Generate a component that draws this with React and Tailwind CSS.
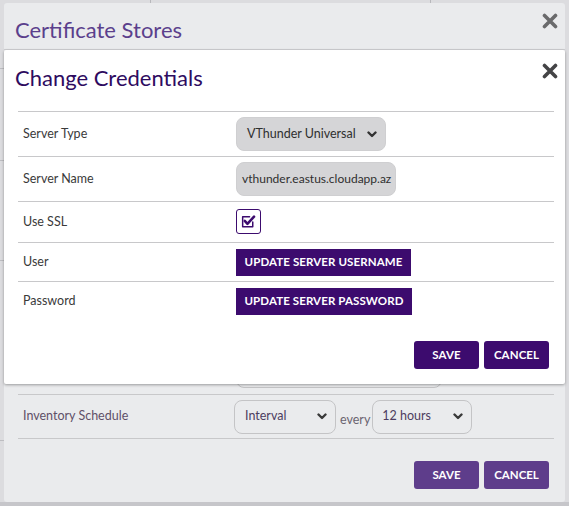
import React from 'react';

const font = { fontFamily: 'Lato, "Open Sans", Arial, sans-serif' };

const Chevron = ({ className = '' }) => (
  <svg viewBox="0 0 10 7" className={`w-[10px] h-[7px] ${className}`} fill="none" stroke="currentColor" strokeWidth="2.4" strokeLinecap="round" strokeLinejoin="round">
    <path d="M1.5 1.5 L5 5 L8.5 1.5" />
  </svg>
);

const CloseIcon = ({ className = '' }) => (
  <svg viewBox="0 0 16 16" className={`w-[16px] h-[16px] ${className}`} fill="none" stroke="currentColor" strokeWidth="3.6" strokeLinecap="round">
    <path d="M2.5 2.5 L13.5 13.5 M13.5 2.5 L2.5 13.5" />
  </svg>
);

const Row = ({ label, h, border = true, children }) => (
  <div className={`flex items-center ${border ? 'border-t border-[#c8c8ca]' : ''} ${h}`}>
    <div className="w-[218px] pl-[5px] text-[12.5px] text-[#3a3a3a]">{label}</div>
    <div className="flex items-center">{children}</div>
  </div>
);

const PurpleButton = ({ children, className = '' }) => (
  <button type="button" className={`bg-[#3c0b6e] text-white text-[11.5px] font-bold tracking-[0.1px] ${className}`}>
    {children}
  </button>
);

export default function App() {
  return (
    <div className="relative w-[569px] h-[506px] overflow-hidden bg-[#c6c6ca]" style={font}>
      {/* page behind */}
      <div className="absolute left-0 top-0 w-[569px] h-[502px] bg-[#dcdcdf]">
        <div className="absolute left-[150px] top-0 w-px h-[4px] bg-[#b8b8bc]" />
        <div className="absolute left-[430px] top-0 w-px h-[4px] bg-[#b8b8bc]" />
        <div className="absolute left-0 top-[68px] w-[4px] h-px bg-[#bdbdc1]" />
        <div className="absolute left-0 top-[160px] w-[4px] h-px bg-[#bdbdc1]" />
        <div className="absolute left-0 top-[260px] w-[4px] h-px bg-[#bdbdc1]" />
        <div className="absolute left-0 top-[440px] w-[4px] h-px bg-[#bdbdc1]" />
      </div>

      {/* outer modal (dimmed) */}
      <div className="absolute left-[4px] top-[3px] w-[561px] h-[499px] bg-[#eaebed] rounded-[3px] flex flex-col">
        <div className="h-[47px] flex items-center justify-between pl-[11px] pr-[7px] pt-[6px] border-b border-[#d0d0d3]">
          <span className="text-[22px] text-[#5b3f8c]">Certificate Stores</span>
          <CloseIcon className="text-[#6a6a6c] -mt-[17px]" />
        </div>
        <div className="flex-1 flex flex-col justify-end pl-[14px] pr-[11px] pb-[13px]">
          <div className="h-[46px] flex items-end pb-[6px]">
            <div className="ml-[218px] w-[206px] h-[34px] rounded-[8px] border border-[#c4c4c6]" />
          </div>
          <div className="flex items-center h-[45px] border-t border-b border-[#c8c8ca]">
            <div className="w-[216px] pl-[5px] text-[12.5px] text-[#5f5068]">Inventory Schedule</div>
            <div className="w-[102px] h-[34px] rounded-[8px] border border-[#c4c4c6] flex items-center justify-between pl-[10px] pr-[8px] text-[12.5px] text-[#4d3d60]">
              Interval
              <Chevron className="text-[#3a3a3a]" />
            </div>
            <span className="ml-[4px] mr-[2px] mt-[8px] text-[12.5px] text-[#6a6470]">every</span>
            <div className="w-[100px] h-[34px] rounded-[8px] border border-[#c4c4c6] flex items-center justify-between pl-[9px] pr-[8px] text-[12.5px] text-[#4d3d60]">
              12 hours
              <Chevron className="text-[#3a3a3a]" />
            </div>
          </div>
          <div className="flex justify-end gap-[5px] mt-[22px] pr-[5px]">
            <button type="button" className="w-[65px] h-[28px] rounded-[3px] bg-[#5e3d8b] text-white text-[11.5px] font-bold">SAVE</button>
            <button type="button" className="w-[65px] h-[28px] rounded-[3px] bg-[#5e3d8b] text-white text-[11.5px] font-bold">CANCEL</button>
          </div>
        </div>
      </div>

      {/* inner modal */}
      <div className="absolute left-[4px] top-[50px] w-[561px] h-[334px] bg-white rounded-[2px] shadow-[0_1px_3px_rgba(0,0,0,0.35)] flex flex-col">
        <div className="flex items-start justify-between pl-[11px] pr-[7px] pt-[15px] h-[61px]">
          <span className="text-[22px] leading-[26px] text-[#2e0b5f]">Change Credentials</span>
          <CloseIcon className="text-[#444446] -mt-[2px]" />
        </div>
        <div className="pl-[14px] pr-[11px]">
          <Row label="Server Type" h="h-[45px]">
            <div className="w-[150px] h-[34px] rounded-[8px] bg-[#d5d5d7] border border-[#cfcfd1] flex items-center justify-between pl-[10px] pr-[8px] text-[12.5px] text-[#2f2f2f]">
              VThunder Universal
              <Chevron className="text-[#333]" />
            </div>
          </Row>
          <Row label="Server Name" h="h-[45px]">
            <div className="w-[160px] h-[34px] rounded-[8px] bg-[#d5d5d7] border border-[#cfcfd1] flex items-center pl-[5px] text-[12px] text-[#2f2f2f] overflow-hidden whitespace-nowrap">
              vthunder.eastus.cloudapp.az
            </div>
          </Row>
          <Row label="Use SSL" h="h-[41px]">
            <div className="-mt-[2px] w-[25px] h-[25px] rounded-[3px] border-[1.5px] border-[#3c0b6e] flex items-center justify-center">
              <svg viewBox="0 0 16 16" className="w-[17px] h-[17px]" fill="none" stroke="#3c0b6e" strokeLinecap="round" strokeLinejoin="round">
                <path d="M12 8.5 V13 H2.5 V3.5 H9" strokeWidth="1.4" />
                <path d="M4.5 7.5 L7 10.2 L13.2 3.5" strokeWidth="2.4" />
              </svg>
            </div>
          </Row>
          <Row label="User" h="h-[39px]">
            <PurpleButton className="w-[175px] h-[27px]">UPDATE SERVER USERNAME</PurpleButton>
          </Row>
          <Row label="Password" h="h-[39px]">
            <PurpleButton className="w-[176px] h-[27px]">UPDATE SERVER PASSWORD</PurpleButton>
          </Row>
        </div>
        <div className="flex justify-end gap-[5px] mt-[21px] pr-[16px]">
          <PurpleButton className="w-[65px] h-[28px] rounded-[3px]">SAVE</PurpleButton>
          <PurpleButton className="w-[65px] h-[28px] rounded-[3px]">CANCEL</PurpleButton>
        </div>
      </div>
    </div>
  );
}
